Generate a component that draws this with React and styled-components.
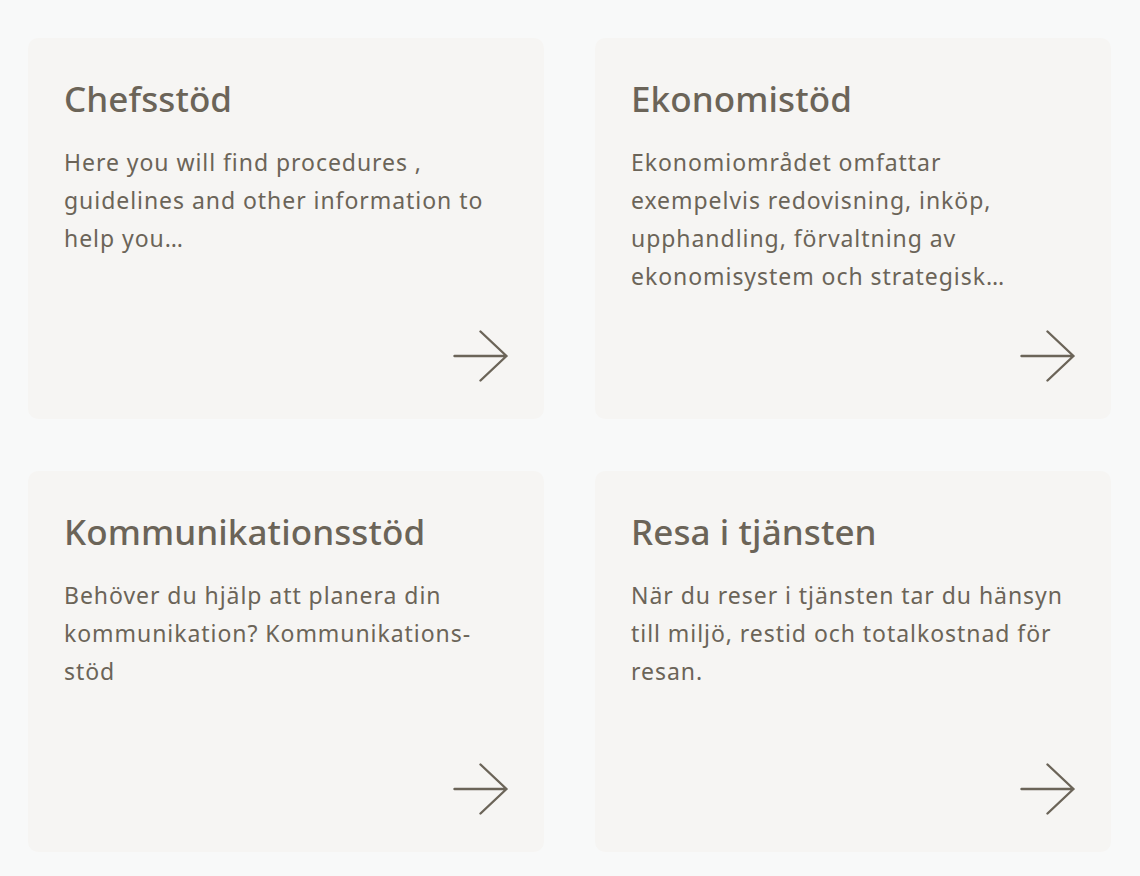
import React from "react";
import styled, { createGlobalStyle } from "styled-components";

const Global = createGlobalStyle`
  html, body { margin: 0; padding: 0; background: #f8f9f9; }
  body { font-family: "Noto Sans", "Open Sans", sans-serif; color: #6b6458; }
  * { box-sizing: border-box; }
`;

const Page = styled.main`
  padding: 38px 29px 23px 28px;
  display: grid;
  grid-template-columns: 1fr 1fr;
  column-gap: 51px;
  row-gap: 52px;
`;

const Card = styled.a`
  display: flex;
  flex-direction: column;
  min-height: 381px;
  padding: 39px 36px 37px 36px;
  background: #f6f5f3;
  border-radius: 10px;
  text-decoration: none;
  color: inherit;
`;

const Title = styled.h2`
  margin: 0;
  font-size: 35px;
  line-height: 43px;
  font-weight: 500;
  letter-spacing: 0.1px;
  color: #6b6458;
`;

const Text = styled.p`
  margin: 23px 0 0 0;
  font-size: 23px;
  line-height: 38px;
  font-weight: 400;
  letter-spacing: 0.95px;
  color: #6b6458;
`;

const ArrowWrap = styled.span`
  margin-top: auto;
  align-self: flex-end;
  display: block;
  width: 56px;
  height: 52px;
`;

const Arrow = () => (
  <ArrowWrap>
    <svg width="56" height="52" viewBox="0 0 56 52" fill="none">
      <path
        d="M2.5 26 H54.5 M28.5 1.5 L54.5 26 L28.5 50.5"
        stroke="#6b6458"
        strokeWidth="2.4"
        strokeLinecap="round"
        strokeLinejoin="round"
      />
    </svg>
  </ArrowWrap>
);

const items = [
  {
    title: "Chefsstöd",
    text: "Here you will find procedures , guidelines and other information to help you…",
  },
  {
    title: "Ekonomistöd",
    text: "Ekonomiområdet omfattar exempelvis redovisning, inköp, upphandling, förvaltning av ekonomisystem och strategisk…",
  },
  {
    title: "Kommunikationsstöd",
    text: "Behöver du hjälp att planera din kommunikation? Kommunikations-stöd",
  },
  {
    title: "Resa i tjänsten",
    text: "När du reser i tjänsten tar du hänsyn till miljö, restid och totalkostnad för resan.",
  },
];

export default function App() {
  return (
    <>
      <Global />
      <Page>
        {items.map((it) => (
          <Card key={it.title} href="#">
            <Title>{it.title}</Title>
            <Text>{it.text}</Text>
            <Arrow />
          </Card>
        ))}
      </Page>
    </>
  );
}
